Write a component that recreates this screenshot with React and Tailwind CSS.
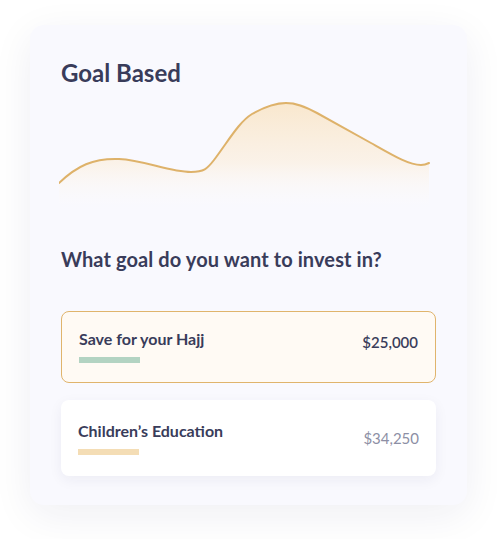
import React from "react";

const LINE =
  "M0,83 C18,66 34,58 60,59 C85,60 110,72 132,72 C145,72 148,69 155,60 C170,40 180,22 193,14 C207,6 217,3 227,3 C237,3 245,6 258,13 L312,43 C335,56 350,65 362,65 C366,65 368,64 370,63";

function Chart() {
  return (
    <svg width="372" height="112" viewBox="0 0 372 112" className="block -ml-[2px]">
      <defs>
        <linearGradient id="goalFill" x1="0" y1="0" x2="0" y2="1">
          <stop offset="0%" stopColor="#f9dcae" stopOpacity="0.6" />
          <stop offset="55%" stopColor="#fcebd3" stopOpacity="0.5" />
          <stop offset="100%" stopColor="#ffffff" stopOpacity="0" />
        </linearGradient>
      </defs>
      <path d={`${LINE} L370,112 L0,112 Z`} fill="url(#goalFill)" />
      <path d={LINE} fill="none" stroke="#deb26a" strokeWidth="2" strokeLinecap="round" />
    </svg>
  );
}

const GoalCard = ({ title, amount, barColor, active }) => (
  <div
    className={`flex justify-between items-start rounded-lg px-[17px] ${
      active
        ? "border-[1.5px] border-[#e0b46c] bg-[#fffaf4] pt-[17px] pb-[19px]"
        : "bg-white pt-[21px] pb-[21px] shadow-[0_4px_14px_rgba(40,40,90,0.06)]"
    }`}
  >
    <div className="flex flex-col">
      <span className="text-[16px] leading-5 font-bold text-[#393c5a]">{title}</span>
      <span className={`mt-[8px] h-[6px] w-[61px] ${barColor}`}></span>
    </div>
    <span
      className={
        active
          ? "mt-[3px] text-[15px] leading-5 font-semibold text-[#3a3d5b]"
          : "mt-[7px] text-[15px] leading-5 font-normal text-[#8d8fa5]"
      }
    >
      {amount}
    </span>
  </div>
);

export default function App() {
  return (
    <div className="w-[497px] h-[539px] bg-white pt-[25px] pl-[30px]" style={{ fontFamily: "Lato, 'Noto Sans', sans-serif" }}>
      <div className="w-[437px] h-[480px] rounded-[14px] bg-[#f9f9fe] shadow-[0_10px_40px_rgba(30,30,90,0.07)] px-[31px] pt-[34px]">
        <h1 className="text-[24px] leading-7 font-bold text-[#393c5a]">Goal Based</h1>
        <div className="mt-[13px]">
          <Chart />
        </div>
        <h2 className="mt-[35px] text-[20px] leading-6 font-bold tracking-[0.1px] text-[#393c5a]">
          What goal do you want to invest in?
        </h2>
        <div className="mt-[40px] flex flex-col gap-[17px]">
          <GoalCard title="Save for your Hajj" amount="$25,000" barColor="bg-[#b3d3c2]" active />
          <GoalCard title="Children’s Education" amount="$34,250" barColor="bg-[#f4ddb5]" />
        </div>
      </div>
    </div>
  );
}
